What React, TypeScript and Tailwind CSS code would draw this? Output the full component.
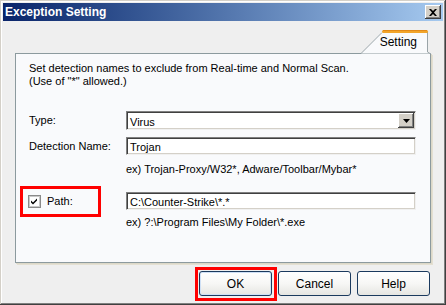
import React from "react";

const font = { fontFamily: '"Liberation Sans", Arial, sans-serif' };

const Sunken = ({ children, className = "" }: { children?: React.ReactNode; className?: string }) => (
  <div
    className={`relative h-[18px] w-[290px] bg-white border-t border-l border-[#808080] border-r border-b border-r-[#f0f0f0] border-b-[#f0f0f0] shadow-[inset_1px_1px_0_#404040,inset_-1px_-1px_0_#d4d0c8] ${className}`}
  >
    {children}
  </div>
);

const Btn = ({ label, def }: { label: string; def?: boolean }) => (
  <div className="relative">
    {def && <span className="absolute -left-[4px] -top-[4px] -right-[5px] -bottom-[5px] border-[3px] border-[#ff0000]" />}
    <button
      className={`w-[73px] h-[25px] rounded-[3px] border border-[#1b3a5e] bg-linear-to-b from-[#ffffff] via-[#f7f7f5] to-[#e6e6e2] text-[12px] text-black ${def ? "shadow-[inset_0_0_0_1px_#cfe0f5]" : ""}`}
    >
      {label}
    </button>
  </div>
);

export default function App() {
  return (
    <div
      className="w-[446px] h-[305px] bg-[#efefef] p-[3px] flex flex-col shadow-[inset_-1px_-1px_0_#404040,inset_1px_1px_0_#d4d0c8,inset_-2px_-2px_0_#808080,inset_2px_2px_0_#ffffff] text-[11px] text-black overflow-hidden"
      style={font}
    >
      {/* title bar */}
      <div className="h-[18px] flex items-center justify-between bg-linear-to-r from-[#0a246a] to-[#a6caf0] pl-[2px] pr-[2px]">
        <span className="text-white font-bold text-[12px] leading-none">Exception Setting</span>
        <div className="w-[16px] h-[14px] bg-[#d4d0c8] flex items-center justify-center shadow-[inset_-1px_-1px_0_#404040,inset_1px_1px_0_#ffffff,inset_-2px_-2px_0_#808080]">
          <svg width="8" height="7" viewBox="0 0 8 7">
            <path d="M0 0h2l2 2 2-2h2L5 3.5 8 7H6L4 5 2 7H0l3-3.5z" fill="#000" />
          </svg>
        </div>
      </div>

      <div className="flex-1 flex flex-col px-[12px]">
        {/* tab strip */}
        <div className="h-[32px] flex justify-end items-end">
          <div className="relative w-[70px] h-[24px] -mb-px flex items-center justify-end pr-[14px]">
            <svg className="absolute left-0 top-0" width="70" height="24" viewBox="0 0 70 24">
              <path d="M0 23.5 L21 1.5 Q21.5 1 23 1 L66 1 L66 22 L70 23.5 Z" fill="#f9fafc" />
              <path d="M0 23.5 L21 2.5" stroke="#9aa4a8" strokeWidth="1" fill="none" />
              <path d="M66.5 2 L66.5 22 L69 23.5" stroke="#9aa4a8" strokeWidth="1" fill="none" />
              <rect x="21" y="0" width="46" height="3" rx="1.5" fill="#f2a52a" />
              <rect x="22" y="0" width="44" height="1" fill="#e38a18" />
            </svg>
            <span className="relative text-[12px] leading-none">Setting</span>
          </div>
        </div>

        {/* panel */}
        <div className="h-[210px] bg-[#f9fafc] border border-[#8c9a9e] shadow-[1px_1px_0_#dcd8c8,2px_2px_0_#e4e0d2] pt-[8px] pl-[13px] flex flex-col">
          <p className="leading-[13px]">
            Set detection names to exclude from Real-time and Normal Scan.
            <br />
            (Use of "*" allowed.)
          </p>

          <div className="mt-[23px] flex items-center">
            <span className="w-[97px]">Type:</span>
            <Sunken className="h-[19px]">
              <span className="absolute left-[3px] top-[2px]">Virus</span>
              <div className="absolute right-[1px] top-[1px] w-[16px] h-[15px] bg-[#d4d0c8] flex items-center justify-center shadow-[inset_-1px_-1px_0_#404040,inset_1px_1px_0_#ffffff,inset_-2px_-2px_0_#808080]">
                <svg width="7" height="4" viewBox="0 0 7 4">
                  <path d="M0 0h7L3.5 4z" fill="#000" />
                </svg>
              </div>
            </Sunken>
          </div>

          <div className="mt-[7px] flex items-center">
            <span className="w-[97px]">Detection Name:</span>
            <Sunken>
              <span className="absolute left-[3px] top-[1px]">Trojan</span>
            </Sunken>
          </div>

          <p className="mt-[8px] ml-[97px] leading-[13px]">ex) Trojan-Proxy/W32*, Adware/Toolbar/Mybar*</p>

          <div className="mt-[16px] flex items-center">
            <div className="relative w-[97px] flex items-center">
              <span className="absolute -left-[9px] -top-[7px] w-[81px] h-[31px] border-[3px] border-[#ff0000]" />
              <svg width="13" height="13" viewBox="0 0 13 13" className="ml-[-1px]">
                <rect x="0.5" y="0.5" width="12" height="12" fill="#fff" stroke="#8a8a8a" />
                <rect x="1.5" y="1.5" width="10" height="10" fill="none" stroke="#c8c8c8" />
                <path d="M3 5.5l2 2 4-4v2l-4 4-2-2z" fill="#000" />
              </svg>
              <span className="ml-[6px]">Path:</span>
            </div>
            <Sunken>
              <span className="absolute left-[3px] top-[1px]">C:\Counter-Strike\*.*</span>
            </Sunken>
          </div>

          <p className="mt-[6px] ml-[97px] leading-[13px]">ex) ?:\Program Files\My Folder\*.exe</p>
        </div>

        {/* buttons */}
        <div className="mt-[8px] flex justify-end gap-[6px] pr-[1px]">
          <Btn label="OK" def />
          <Btn label="Cancel" />
          <Btn label="Help" />
        </div>
      </div>
    </div>
  );
}
